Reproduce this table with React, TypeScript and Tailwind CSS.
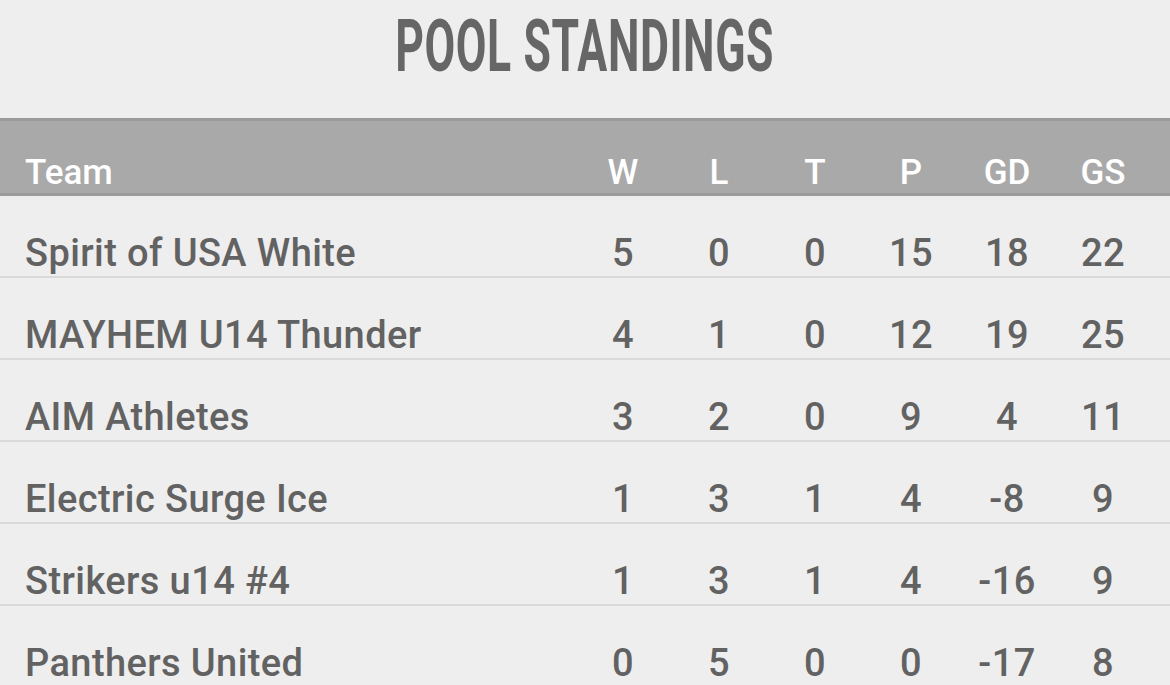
import React from "react";

type Row = {
  team: string;
  w: number;
  l: number;
  t: number;
  p: number;
  gd: number;
  gs: number;
};

const rows: Row[] = [
  { team: "Spirit of USA White", w: 5, l: 0, t: 0, p: 15, gd: 18, gs: 22 },
  { team: "MAYHEM U14 Thunder", w: 4, l: 1, t: 0, p: 12, gd: 19, gs: 25 },
  { team: "AIM Athletes", w: 3, l: 2, t: 0, p: 9, gd: 4, gs: 11 },
  { team: "Electric Surge Ice", w: 1, l: 3, t: 1, p: 4, gd: -8, gs: 9 },
  { team: "Strikers u14 #4", w: 1, l: 3, t: 1, p: 4, gd: -16, gs: 9 },
  { team: "Panthers United", w: 0, l: 5, t: 0, p: 0, gd: -17, gs: 8 },
];

const cols = ["W", "L", "T", "P", "GD", "GS"];

export default function App() {
  return (
    <div className="min-h-screen bg-[#eeeeee] font-['Roboto',sans-serif]">
      {/* Titulo */}
      <div className="h-[118px] flex justify-center pt-[10px]">
        <h1 className="inline-block scale-x-[0.61] text-[73px] leading-none font-bold text-[#666666] tracking-[1px]">
          POOL STANDINGS
        </h1>
      </div>

      {/* Cabecera */}
      <div className="grid grid-cols-[1fr_repeat(6,96px)] pr-[19px] h-[78px] bg-[#a9a9a9] border-y-[3px] border-[#9b9b9b] items-end pb-[3px] text-white text-[35px] leading-none font-medium">
        <div className="pl-[25px]">Team</div>
        {cols.map((c) => (
          <div key={c} className="text-center">
            {c}
          </div>
        ))}
      </div>

      {/* Filas */}
      {rows.map((r) => (
        <div
          key={r.team}
          className="grid grid-cols-[1fr_repeat(6,96px)] pr-[19px] h-[82px] border-b-2 border-[#d9d9d9] items-end pb-[4px] text-[#626262] text-[38px] leading-none font-medium tracking-[0.4px]"
        >
          <div className="pl-[25px]">{r.team}</div>
          <div className="text-center">{r.w}</div>
          <div className="text-center">{r.l}</div>
          <div className="text-center">{r.t}</div>
          <div className="text-center">{r.p}</div>
          <div className="text-center">{r.gd}</div>
          <div className="text-center">{r.gs}</div>
        </div>
      ))}
    </div>
  );
}
